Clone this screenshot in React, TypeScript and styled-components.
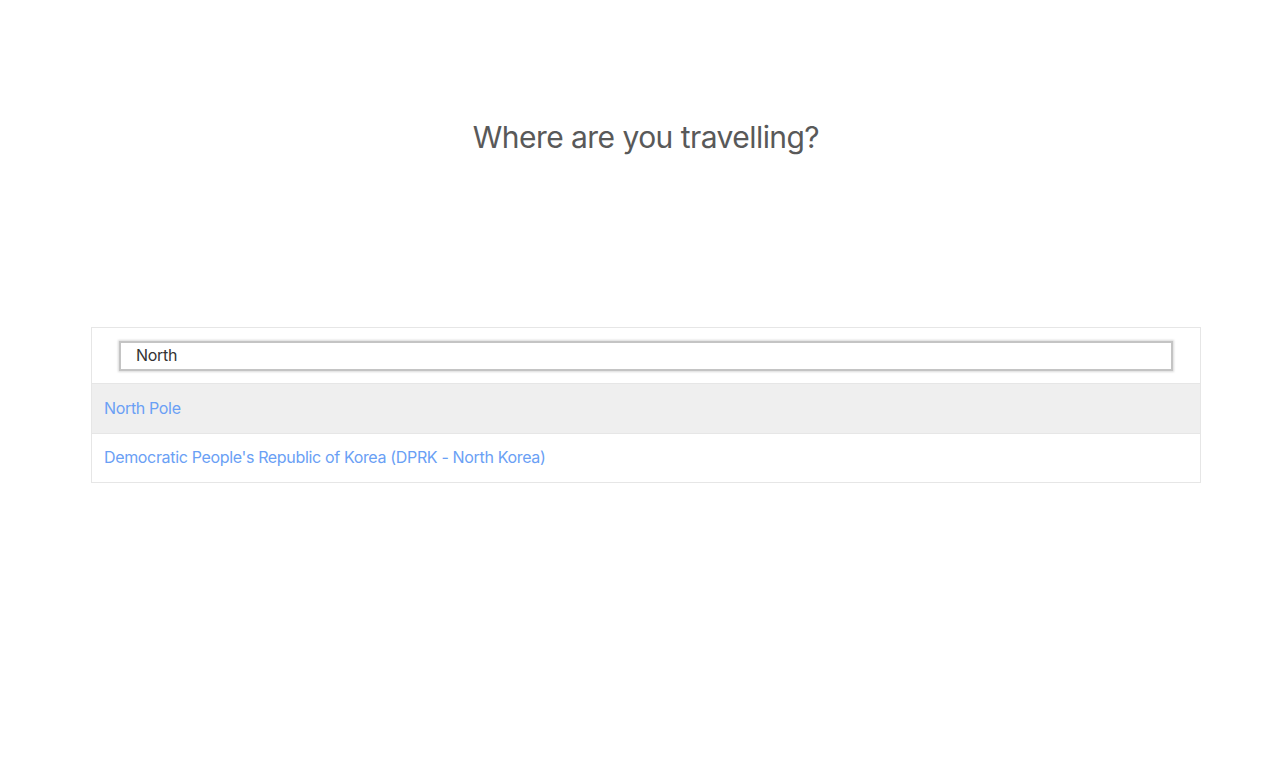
import React from "react";
import styled, { createGlobalStyle } from "styled-components";

const Global = createGlobalStyle`
  html, body { margin: 0; padding: 0; background: #fff; }
  body { font-family: Inter, "Open Sans", "Liberation Sans", sans-serif; }
`;

const Page = styled.div`
  display: flex;
  flex-direction: column;
  align-items: center;
  padding-left: 12px;
  min-height: 778px;
  box-sizing: border-box;
`;

const Title = styled.h1`
  margin: 117px 0 0;
  font-size: 30px;
  font-weight: 400;
  color: #595959;
  line-height: 40px;
  letter-spacing: -0.55px;
`;

const Panel = styled.div`
  margin-top: 170px;
  width: 1110px;
  border: 1px solid #e6e6e6;
  box-sizing: border-box;
`;

const SearchBar = styled.div`
  height: 55px;
  display: flex;
  align-items: center;
  padding: 0 27px;
  border-bottom: 1px solid #e6e6e6;
`;

const SearchInput = styled.input`
  flex: 1;
  height: 30px;
  box-sizing: border-box;
  border: 2px solid #c4c4c4;
  box-shadow: 0 0 2px 1px rgba(0, 0, 0, 0.15);
  padding: 0 15px 2px;
  font-family: inherit;
  font-size: 16px;
  letter-spacing: -0.3px;
  color: #333;
  outline: none;
`;

const Row = styled.div<{ $active?: boolean }>`
  height: 49px;
  box-sizing: border-box;
  display: flex;
  align-items: center;
  padding: 0 12px 2px;
  background: ${(p) => (p.$active ? "#efefef" : "#fff")};
  & + & {
    border-top: 1px solid #e6e6e6;
  }
`;

const RowLink = styled.a`
  font-size: 16px;
  letter-spacing: -0.34px;
  color: #6aa0f5;
  text-decoration: none;
`;

const results = [
  "North Pole",
  "Democratic People's Republic of Korea (DPRK - North Korea)",
];

export default function App() {
  return (
    <>
      <Global />
      <Page>
        <Title>Where are you travelling?</Title>
        <Panel>
          <SearchBar>
            <SearchInput defaultValue="North" />
          </SearchBar>
          {results.map((r, i) => (
            <Row key={r} $active={i === 0}>
              <RowLink href="#">{r}</RowLink>
            </Row>
          ))}
        </Panel>
      </Page>
    </>
  );
}
